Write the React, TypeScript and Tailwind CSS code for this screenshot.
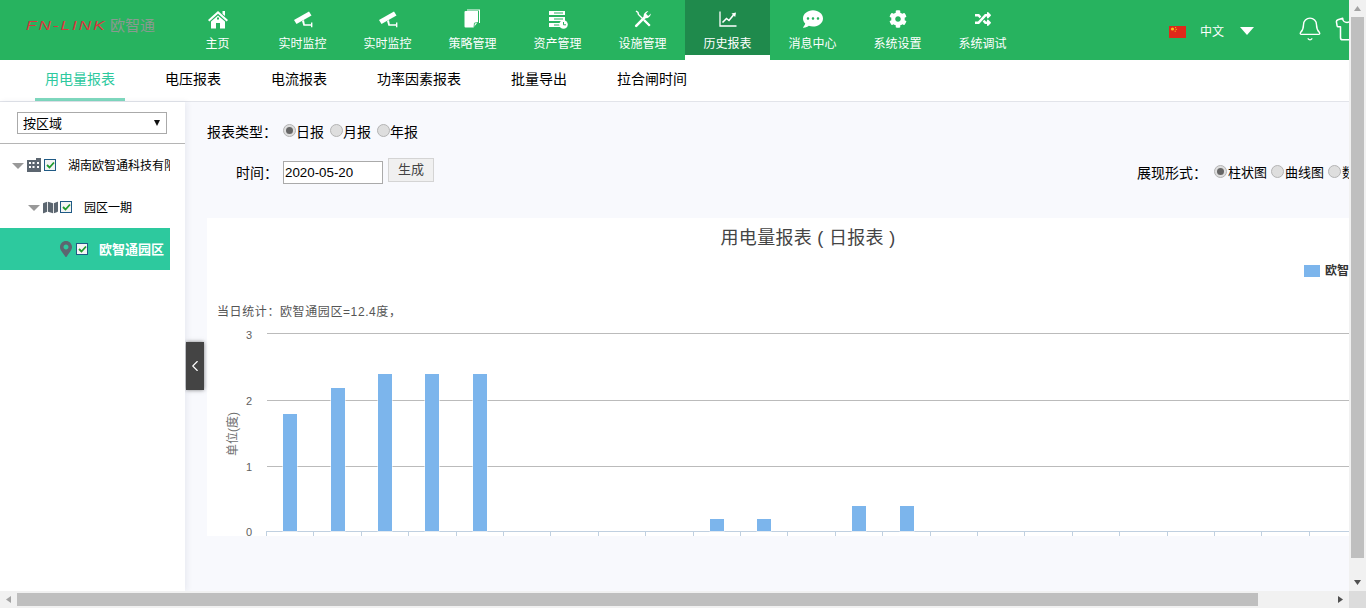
import { FaCommentDots, FaCog, FaMap, FaMapMarkerAlt, FaRandom } from "react-icons/fa";
import { Bell, ChevronLeft, Shirt } from "lucide-react";
import type { ReactNode } from "react";

const FONT = "font-['Liberation_Sans','Noto_Sans_CJK_SC',sans-serif]";

function HomeIcon() {
  return (
    <svg width="22" height="19" viewBox="0 0 22 19" fill="#fff">
      <path d="M15.5 1 H18 V6 L15.5 4 Z" />
      <path d="M1 10 L11 1 L21 10 L19.6 11.4 L11 3.8 L2.4 11.4 Z" />
      <path d="M4 11.6 L11 5.4 L18 11.6 V18.5 H13 V13 H9 V18.5 H4 Z" />
      <path d="M10 7.6 H12 V9.6 H10 Z" fill="#27b35f" />
    </svg>
  );
}

function CameraIcon() {
  return (
    <svg width="20" height="20" viewBox="0 0 20 20" fill="#fff">
      <path d="M1 11 L16 2.5 L18.5 6.5 L3.5 15 Z" />
      <path d="M9 12 L11 11 L11.8 15.2 L18 15.2 L18 13.6 L19.4 13.6 L19.4 18.2 L18 18.2 L18 16.8 L10.4 16.8 Z" />
    </svg>
  );
}

function NoteIcon() {
  return (
    <svg width="17" height="20" viewBox="0 0 17 20">
      <path d="M3 0.5 H16 V14 H15 V1.5 H3 Z" fill="#fff" />
      <path d="M1.5 2 H14 V13 L9.5 18.5 H1.5 Q0.5 18.5 0.5 17.5 V3 Q0.5 2 1.5 2 Z" fill="#fff" />
      <path d="M10 18 L10.5 14 L14 13.5" fill="none" stroke="#27b35f" strokeWidth="0.8" />
    </svg>
  );
}

function ServerClockIcon() {
  return (
    <svg width="20" height="19" viewBox="0 0 20 19">
      <path d="M1 1 H17 V5 H1 Z M1 7 H17 V11 H1 Z M1 13 H13 V17 H1 Z" fill="#fff" />
      <path d="M6 2.5 H15 V3.5 H6 Z M6 8.5 H15 V9.5 H6 Z M6 14.5 H12 V15.5 H6 Z" fill="#27b35f" />
      <circle cx="15.5" cy="14.5" r="4.3" fill="#fff" />
      <path d="M15.5 12 V14.8 H18" fill="none" stroke="#27b35f" strokeWidth="1" />
    </svg>
  );
}

function ToolsIcon() {
  return (
    <svg width="18" height="18" viewBox="0 0 18 18" fill="none">
      <path d="M2 1 L4 2.5 L4.4 4.4 L15.6 15.6" stroke="#fff" strokeWidth="1.4" />
      <path d="M10.8 9.2 L16.6 15 L15 16.6 L9.2 10.8 Z" fill="#fff" />
      <path d="M2.2 15.8 L10.6 7.4" stroke="#fff" strokeWidth="2.6" strokeLinecap="round" />
      <path d="M10 8 C8.8 5 10.6 1.6 14.4 1 L12 3.8 L14.2 6 L17 3.6 C16.4 7.4 13 9.2 10 8 Z" fill="#fff" />
    </svg>
  );
}

function ChartIcon() {
  return (
    <svg width="18" height="16" viewBox="0 0 18 16" fill="none">
      <path d="M1 0.5 V15 H17.5" stroke="#fff" strokeWidth="1.3" />
      <path d="M3.5 11.5 L7.5 7.5 L10 9.5 L14.5 4" stroke="#fff" strokeWidth="1.6" />
      <path d="M12.5 2.5 L17 1.5 L16.2 6 Z" fill="#fff" />
    </svg>
  );
}

function BuildingIcon() {
  return (
    <svg width="14" height="14" viewBox="0 0 14 14" className="ml-[3px] shrink-0">
      <path d="M0 2 H9 V0 H14 V14 H0 Z" fill="#5c6670" />
      <path d="M2 4 H4 V6 H2 Z M5.5 4 H7.5 V6 H5.5 Z M10 4 H12 V6 H10 Z M2 8 H4 V10 H2 Z M5.5 8 H7.5 V10 H5.5 Z M10 8 H12 V10 H10 Z" fill="#fff" />
    </svg>
  );
}

const navItems: { label: string; icon: ReactNode; active?: boolean }[] = [
  { label: "主页", icon: <HomeIcon /> },
  { label: "实时监控", icon: <CameraIcon /> },
  { label: "实时监控", icon: <CameraIcon /> },
  { label: "策略管理", icon: <NoteIcon /> },
  { label: "资产管理", icon: <ServerClockIcon /> },
  { label: "设施管理", icon: <ToolsIcon /> },
  { label: "历史报表", icon: <ChartIcon />, active: true },
  { label: "消息中心", icon: <FaCommentDots size={20} /> },
  { label: "系统设置", icon: <FaCog size={18} /> },
  { label: "系统调试", icon: <FaRandom size={16} /> },
];

const tabs = ["用电量报表", "电压报表", "电流报表", "功率因素报表", "批量导出", "拉合闸时间"];

const bars = [
  { x: 283, h: 117 },
  { x: 331, h: 143 },
  { x: 378, h: 157 },
  { x: 425, h: 157 },
  { x: 473, h: 157 },
  { x: 710, h: 12 },
  { x: 757, h: 12 },
  { x: 852, h: 25 },
  { x: 900, h: 25 },
];

function Header() {
  return (
    <header className="flex h-[60px] shrink-0 bg-[#27b35f] text-white overflow-hidden">
      <div className="w-[175px] shrink-0 pl-[26px] pt-[17px] flex items-start">
        <span className="text-[#d9363e] italic text-[13px] leading-[18px] tracking-[1.5px] scale-x-[1.32] origin-left w-[84px] whitespace-nowrap">
          FN-LINK
        </span>
        <span className="text-[#8a9a90] text-[15px] leading-[18px] whitespace-nowrap">欧智通</span>
      </div>
      <nav className="flex">
        {navItems.map((item, i) => (
          <div
            key={i}
            className={
              item.active
                ? "w-[85px] h-[60px] bg-[#1f8a4c] border-b-[5px] border-white flex flex-col items-center"
                : "w-[85px] h-[60px] flex flex-col items-center"
            }
          >
            <div className="h-[22px] mt-[8px] flex items-center justify-center">{item.icon}</div>
            <span className="mt-[6px] text-[12px] leading-[16px] whitespace-nowrap">{item.label}</span>
          </div>
        ))}
      </nav>
      <div className="ml-[144px] flex items-center shrink-0 h-[60px] pt-[3px]">
        <svg width="17" height="12" viewBox="0 0 17 12">
          <rect width="17" height="12" fill="#e0281a" />
          <circle cx="3.5" cy="3" r="1.6" fill="#f5c518" />
          <circle cx="6.6" cy="1.6" r="0.6" fill="#f5c518" />
          <circle cx="7.2" cy="3.4" r="0.6" fill="#f5c518" />
          <circle cx="6.2" cy="5.2" r="0.6" fill="#f5c518" />
        </svg>
        <span className="ml-[14px] text-[12px]">中文</span>
        <svg width="14" height="8" viewBox="0 0 14 8" className="ml-[16px] mt-[-2px]">
          <path d="M0 0 H14 L7 8 Z" fill="#fff" />
        </svg>
        <Bell size={26} strokeWidth={1.3} className="ml-[43px] mt-[-5px] shrink-0" />
        <Shirt size={26} strokeWidth={1.4} className="ml-[11px] mt-[-5px] shrink-0" />
      </div>
    </header>
  );
}

function TabBar() {
  return (
    <div className="flex h-[42px] shrink-0 bg-white border-b border-[#e2e4ea] pl-[35px] gap-[30px]">
      {tabs.map((t, i) => (
        <div
          key={t}
          className={
            i === 0
              ? "h-[41px] px-[10px] text-[14px] leading-[39px] text-[#2dc99e] border-b-[3px] border-[#7fd9bf]"
              : "h-[41px] px-[10px] text-[14px] leading-[39px] text-black"
          }
        >
          {t}
        </div>
      ))}
    </div>
  );
}

function Check() {
  return (
    <span className="w-[12px] h-[12px] border border-[#1f5a85] bg-[#f4f4f4] flex items-center justify-center shrink-0">
      <svg width="9" height="8" viewBox="0 0 9 8">
        <path d="M1 4 L3.5 6.5 L8 1.5" fill="none" stroke="#1f9a2c" strokeWidth="1.8" />
      </svg>
    </span>
  );
}

function Caret() {
  return (
    <svg width="12" height="6" viewBox="0 0 12 6" className="shrink-0 mt-[2px]">
      <path d="M0 0 H12 L6 6 Z" fill="#999" />
    </svg>
  );
}

function Sidebar() {
  return (
    <aside className="w-[185px] shrink-0 bg-white shadow-[2px_0_6px_rgba(30,40,90,0.07)] z-10">
      <div className="pt-[10px] pb-[9px] pl-[17px] pr-[18px] border-b border-[#b5b5b5] h-[42px]">
        <div className="h-[22px] border border-[#aaa] flex items-center justify-between pl-[5px] pr-[6px] text-[13px] text-black">
          <span className="pt-[2px]">按区域</span>
          <svg width="6" height="6" viewBox="0 0 6 6">
            <path d="M0 0 H6 L3 6 Z" fill="#111" />
          </svg>
        </div>
      </div>
      <div className="w-[170px] text-[12px] text-black">
        <div className="h-[42px] flex items-center pl-[12px] overflow-hidden whitespace-nowrap">
          <Caret />
          <BuildingIcon />
          <span className="ml-[3px]"><Check /></span>
          <span className="ml-[12px] pt-[2px]">湖南欧智通科技有限公司</span>
        </div>
        <div className="h-[42px] flex items-center pl-[28px] overflow-hidden whitespace-nowrap">
          <Caret />
          <FaMap size={15} className="text-[#5c6670] ml-[3px] shrink-0" />
          <span className="ml-[2px]"><Check /></span>
          <span className="ml-[12px] pt-[2px]">园区一期</span>
        </div>
        <div className="h-[42px] flex items-center pl-[58px] bg-[#2dc99e] overflow-hidden whitespace-nowrap">
          <FaMapMarkerAlt size={16} className="text-[#5c6670] shrink-0" />
          <span className="ml-[2px]"><Check /></span>
          <span className="ml-[11px] pt-[2px] text-white font-bold text-[13px]">欧智通园区</span>
        </div>
      </div>
    </aside>
  );
}

function Radio({ checked, label, labelClass }: { checked?: boolean; label: string; labelClass?: string }) {
  return (
    <span className="flex items-center whitespace-nowrap">
      <span className="w-[13px] h-[13px] rounded-full border border-[#b4b4b4] bg-[#dedede] flex items-center justify-center mt-[-3px] shrink-0">
        {checked && <span className="w-[7px] h-[7px] rounded-full bg-[#666]" />}
      </span>
      <span className={labelClass}>{label}</span>
    </span>
  );
}

function Chart() {
  const ticks = Array.from({ length: 24 }, (_, i) => 266 + i * 47.4);
  return (
    <svg width="1142" height="216" viewBox="207 320 1142 216" className="block">
      {[333.5, 400.5, 466.5].map((y) => (
        <line key={y} x1="267" x2="1349" y1={y} y2={y} stroke="#bbb" />
      ))}
      <line x1="266" x2="1349" y1="531.5" y2="531.5" stroke="#c0d0e0" />
      {ticks.map((x) => (
        <line key={x} x1={Math.round(x) + 0.5} x2={Math.round(x) + 0.5} y1="531" y2="536" stroke="#c0d0e0" />
      ))}
      {bars.map((b) => (
        <rect key={b.x} x={b.x} y={531 - b.h} width="14" height={b.h} fill="#7cb5ec" stroke="#fff" strokeWidth="1" paintOrder="stroke" />
      ))}
      {[["3", 339], ["2", 405], ["1", 471], ["0", 536]].map(([t, y]) => (
        <text key={t} x="252" y={y} textAnchor="end" fontSize="11" fill="#606060">
          {t}
        </text>
      ))}
      <text x="237" y="434" textAnchor="middle" fontSize="12" fill="#707070" transform="rotate(-90 237 434)">
        单位(度)
      </text>
    </svg>
  );
}

function Main() {
  return (
    <main className="relative flex-1 min-w-0 bg-[#f8f9fd] overflow-hidden text-[14px] text-black">
      <button className="absolute left-[1px] top-[240px] z-20 w-[18px] h-[48px] bg-[#444] text-white flex items-center justify-center shadow-[0_0_4px_rgba(0,0,0,0.5)]">
        <ChevronLeft size={20} strokeWidth={1.5} />
      </button>
      <div className="pl-[22px] pt-[20px]">
        <div className="flex items-center h-[20px] whitespace-nowrap">
          <span>报表类型：</span>
          <span className="ml-[6px] flex gap-[6px]">
            <Radio checked label="日报" />
            <Radio label="月报" />
            <Radio label="年报" />
          </span>
        </div>
        <div className="flex h-[26px] mt-[16px] whitespace-nowrap">
          <span className="ml-[29px] mt-[5px] leading-[20px]">时间：</span>
          <span className="ml-[5px] mt-[3px] w-[100px] h-[23px] border border-[#aaa] bg-white px-[1px] leading-[21px] text-[13.33px]">2020-05-20</span>
          <span className="ml-[5px] w-[46px] h-[24px] border border-[#d4d4d4] bg-[#f0f0f0] text-[#444] text-[13px] leading-[21px] text-center">生成</span>
          <div className="flex-1" />
          <div className="flex items-center h-[26px] mt-[2px] text-[13px] overflow-hidden w-[212px] shrink-0 gap-[4px]">
            <span className="text-[14px]">展现形式：</span>
            <span className="ml-[3px]"><Radio checked label="柱状图" labelClass="ml-[1px]" /></span>
            <Radio label="曲线图" labelClass="ml-[1px]" />
            <Radio label="数据表" labelClass="ml-[1px]" />
          </div>
        </div>
        <section className="mt-[34px] h-[318px] bg-white overflow-hidden">
          <div className="w-[1202px] pt-[8px] h-[31px] text-center text-[18px] leading-[24px] tracking-[0.3px] text-[#444]">用电量报表 ( 日报表 )</div>
          <div className="flex items-center h-[16px] mt-[14px] pl-[1097px] whitespace-nowrap text-[12px] text-[#333]">
            <span className="w-[16px] h-[12px] bg-[#7cb5ec] shrink-0" />
            <span className="ml-[5px] font-bold">欧智通园区</span>
          </div>
          <div className="h-[16px] mt-[25px] pl-[10px] text-[12px] leading-[16px] text-[#555] tracking-[0.6px]">当日统计：欧智通园区=12.4度，</div>
          <Chart />
        </section>
      </div>
    </main>
  );
}

function VScroll() {
  return (
    <div className="w-[17px] shrink-0 bg-[#f1f1f1] flex flex-col items-center">
      <svg width="9" height="17" viewBox="0 0 9 17" className="shrink-0">
        <path d="M1 11 L4.5 6 L8 11 Z" fill="#a3a3a3" />
      </svg>
      <div className="w-[13px] h-[541px] bg-[#bfbfbf] shrink-0" />
      <div className="flex-1" />
      <svg width="9" height="17" viewBox="0 0 9 17" className="shrink-0">
        <path d="M1 6 L8 6 L4.5 11 Z" fill="#505050" />
      </svg>
    </div>
  );
}

function HScroll() {
  return (
    <div className="h-[17px] shrink-0 flex bg-[#f1f1f1]">
      <div className="w-[17px] flex items-center justify-center shrink-0">
        <svg width="17" height="9" viewBox="0 0 17 9">
          <path d="M11 1 V8 L6 4.5 Z" fill="#a3a3a3" />
        </svg>
      </div>
      <div className="w-[1241px] h-[13px] mt-[2px] bg-[#bfbfbf] shrink-0" />
      <div className="flex-1" />
      <div className="w-[17px] flex items-center justify-center shrink-0">
        <svg width="17" height="9" viewBox="0 0 17 9">
          <path d="M6 1 V8 L11 4.5 Z" fill="#505050" />
        </svg>
      </div>
      <div className="w-[17px] bg-[#dcdcdc] shrink-0" />
    </div>
  );
}

export default function App() {
  return (
    <div className={`w-[1366px] h-[608px] flex flex-col overflow-hidden bg-white ${FONT}`}>
      <div className="flex flex-1 min-h-0">
        <div className="w-[1349px] shrink-0 flex flex-col overflow-hidden">
          <Header />
          <TabBar />
          <div className="flex flex-1 min-h-0">
            <Sidebar />
            <Main />
          </div>
        </div>
        <VScroll />
      </div>
      <HScroll />
    </div>
  );
}
